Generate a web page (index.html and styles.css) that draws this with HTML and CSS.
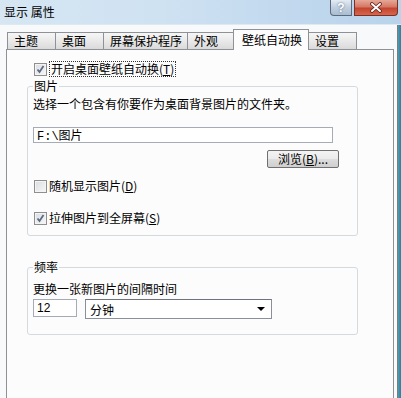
FILE: index.html
```html
<!DOCTYPE html>
<html lang="zh-CN">
<head>
    <meta charset="UTF-8">
    <title>显示 属性</title>
    <link rel="stylesheet" href="styles.css">
</head>
<body>
    <div class="window">
        <div class="titlebar">
            <span class="title">显示 属性</span>
            <div class="caption-buttons">
                <div class="cap-btn help">?</div>
                <div class="cap-btn close">
                    <svg width="14" height="11" viewBox="0 0 14 11">
                        <path d="M3 2 L11 9 M11 2 L3 9" stroke="#5a2218" stroke-width="3.6" stroke-linecap="round"/>
                        <path d="M3 2 L11 9 M11 2 L3 9" stroke="#fff" stroke-width="2" stroke-linecap="round"/>
                    </svg>
                </div>
            </div>
        </div>
        <div class="body">
            <div class="client">
                <div class="tabs">
                    <div class="tab">主题</div>
                    <div class="tab">桌面</div>
                    <div class="tab">屏幕保护程序</div>
                    <div class="tab">外观</div>
                    <div class="tab active">壁纸自动换</div>
                    <div class="tab">设置</div>
                </div>
                <div class="panel">
                    <div class="check-row main">
                        <span class="checkbox checked"></span>
                        <span class="focus">开启桌面壁纸自动换(<u>T</u>)</span>
                    </div>

                    <fieldset class="group">
                        <legend>图片</legend>
                        <p class="desc">选择一个包含有你要作为桌面背景图片的文件夹。</p>
                        <input class="textbox path" type="text" value="F:\图片">
                        <div class="btn-row">
                            <button class="btn">浏览(<u>B</u>)...</button>
                        </div>
                        <div class="check-row random">
                            <span class="checkbox"></span>
                            <span>随机显示图片(<u>D</u>)</span>
                        </div>
                        <div class="check-row stretch">
                            <span class="checkbox checked"></span>
                            <span>拉伸图片到全屏幕(<u>S</u>)</span>
                        </div>
                    </fieldset>

                    <fieldset class="group freq">
                        <legend>频率</legend>
                        <p class="desc">更换一张新图片的间隔时间</p>
                        <div class="interval">
                            <input class="textbox num" type="text" value="12">
                            <div class="combo">
                                <span>分钟</span>
                                <span class="arrow"></span>
                            </div>
                        </div>
                    </fieldset>
                </div>
            </div>
            <div class="frame-edge"></div>
        </div>
    </div>
</body>
</html>
```

FILE: styles.css
```css
* {
    box-sizing: border-box;
}

body {
    margin: 0;
    font-family: "Noto Sans CJK SC", "Liberation Sans", sans-serif;
    font-size: 12px;
    color: #000;
    background: #fff;
}

u {
    text-decoration: underline;
}

.window {
    width: 401px;
    height: 398px;
    display: flex;
    flex-direction: column;
    overflow: hidden;
    background: #f8f9fa;
}

/* title bar */
.titlebar {
    height: 25px;
    flex: none;
    display: flex;
    justify-content: space-between;
    align-items: flex-start;
    background: linear-gradient(to right, #d6e6f3 0%, #cfe2f2 40%, #c2d9ee 70%, #b9d3eb 100%);
    border-bottom: 1px solid #dfe9f2;
}

.title {
    margin: 5px 0 0 4px;
    line-height: 14px;
    font-size: 12px;
}

.caption-buttons {
    display: flex;
    gap: 2px;
    margin-right: 3px;
}

.cap-btn {
    height: 16px;
    border: 1px solid #5d6a7c;
    border-top: none;
    display: flex;
    align-items: center;
    justify-content: center;
}

.help {
    width: 22px;
    border-radius: 0 0 0 4px;
    background: linear-gradient(#e4ebf3, #c0cfdf 50%, #a9bdd2);
    color: #fff;
    font-family: "Liberation Sans", sans-serif;
    font-weight: bold;
    font-size: 12px;
    text-shadow: 0 0 2px #4d5f78;
}

.close {
    width: 44px;
    border-color: #7a3126;
    border-radius: 0 0 4px 0;
    background: linear-gradient(#e6a898, #d67866 45%, #c4452f 55%, #d7664e);
}

.body {
    flex: 1;
    display: flex;
    min-height: 0;
}

.client {
    flex: 1;
    display: flex;
    flex-direction: column;
    padding-top: 4px;
    border-right: 1px solid #7c7c7c;
}

.frame-edge {
    width: 3px;
    background: linear-gradient(to right, #4f9cb5, #2a7f9c);
}

/* tabs */
.tabs {
    display: flex;
    align-items: flex-end;
    height: 20px;
    padding-left: 7px;
    flex: none;
}

.tab {
    height: 17px;
    min-width: 49px;
    padding: 0 5px 0 6px;
    margin-right: -1px;
    line-height: 16px;
    border: 1px solid #8e9196;
    border-bottom: none;
    background: linear-gradient(#f6f6f6, #e9e9e9 50%, #dadada);
    white-space: nowrap;
}

.tab.active {
    position: relative;
    z-index: 1;
    height: 21px;
    margin: 0 -1px -1px -2px;
    padding: 2px 6px 0 8px;
    background: #fcfcfc;
}

/* panel */
.panel {
    flex: 1;
    margin: 0 3px 0 6px;
    padding: 11px 0 0 20px;
    border: 1px solid #8e9196;
    border-bottom: none;
    background: #fcfcfc;
}

.check-row {
    display: flex;
    align-items: center;
    height: 16px;
    line-height: 14px;
    white-space: nowrap;
}

.check-row.main {
    margin-left: 7px;
}

.checkbox {
    width: 13px;
    height: 13px;
    margin-right: 2px;
    flex: none;
    border: 1px solid #8f8f8f;
    background: linear-gradient(135deg, #d9dde2, #f7f7f7);
    box-shadow: inset 0 0 0 1px #f4f4f4;
}

.checkbox.checked {
    background:
        url("data:image/svg+xml;utf8,<svg xmlns='http://www.w3.org/2000/svg' width='11' height='11'><path d='M2.5 5.5 L4.5 8 L8.5 2' fill='none' stroke='%235d6a82' stroke-width='1.8'/></svg>") center/11px 11px no-repeat,
        linear-gradient(135deg, #d9dde2, #f7f7f7);
}

.focus {
    padding: 0 1px;
    border: 1px dotted #333;
}

/* group boxes */
.group {
    width: 331px;
    margin: 3px 0 0;
    padding: 0 18px 9px 5px;
    border: 1px solid #d3dbe1;
    border-radius: 3px;
    min-width: 0;
}

.group legend {
    padding: 0 1px;
    line-height: 12px;
}

.desc {
    margin: 5px 0 0;
    line-height: 14px;
    white-space: nowrap;
}

.textbox {
    display: block;
    height: 16px;
    padding: 0 3px;
    border: 1px solid #a5acb5;
    background: #fff;
    font-family: "Liberation Mono", "Noto Sans CJK SC", monospace;
    font-size: 12px;
    color: #000;
    outline: none;
}

.path {
    width: 300px;
    margin-top: 16px;
}

.btn-row {
    display: flex;
    justify-content: flex-end;
    margin-top: 7px;
}

.btn {
    width: 72px;
    height: 18px;
    padding: 0;
    border: 1px solid #707070;
    border-radius: 2px;
    background: linear-gradient(#f3f3f3, #ebebeb 50%, #dddddd 51%, #cfcfcf);
    font-family: inherit;
    font-size: 12px;
    line-height: 14px;
    color: #000;
}

.check-row.random {
    margin-top: 10px;
    margin-left: 1px;
}

.check-row.stretch {
    margin-top: 16px;
    margin-left: 1px;
}

.freq {
    margin-top: 25px;
    padding-bottom: 15px;
}

.freq .desc {
    margin-top: 9px;
}

.interval {
    display: flex;
    align-items: flex-start;
    gap: 8px;
    margin-top: 3px;
}

.num {
    width: 44px;
    height: 18px;
    font-family: "Liberation Sans", sans-serif;
}

.combo {
    width: 187px;
    height: 20px;
    display: flex;
    align-items: center;
    justify-content: space-between;
    padding: 0 6px 0 4px;
    border: 1px solid #8a8f99;
    border-top-color: #6e737c;
    background: #fff;
}

.arrow {
    width: 0;
    height: 0;
    border-left: 4px solid transparent;
    border-right: 4px solid transparent;
    border-top: 4px solid #000;
}
```
